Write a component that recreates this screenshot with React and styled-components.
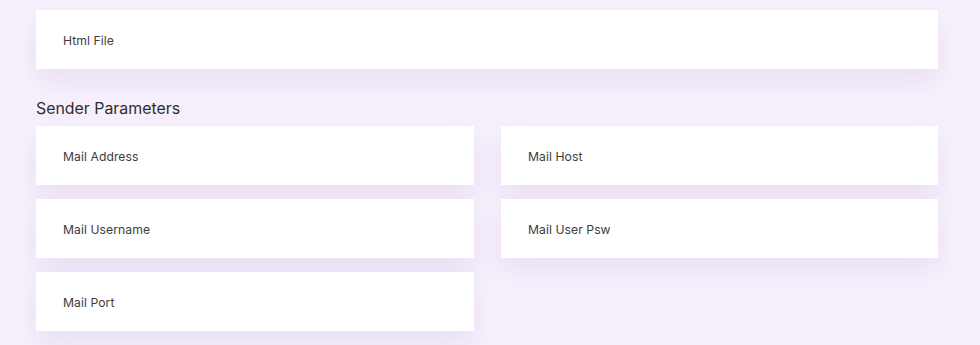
import styled, { createGlobalStyle } from 'styled-components';

const GlobalStyle = createGlobalStyle`
  html, body {
    margin: 0;
    padding: 0;
    background: #f7f0fc;
    font-family: Inter, "Noto Sans", sans-serif;
  }
`;

const Page = styled.div`
  box-sizing: border-box;
  width: 980px;
  min-height: 345px;
  padding: 10px 42px 14px 36px;
  background: #f7f0fc;
`;

const Card = styled.div`
  box-sizing: border-box;
  height: 59px;
  display: flex;
  align-items: center;
  padding: 2px 27px 0;
  background: #ffffff;
  box-shadow: 0 12px 28px rgba(110, 80, 170, 0.1);
  font-size: 12.2px;
  letter-spacing: 0.05px;
  color: #3d3d3d;
`;

const SectionTitle = styled.h3`
  margin: 30px 0 7px;
  font-size: 15.9px;
  line-height: 20px;
  font-weight: 400;
  color: #2e2e2e;
`;

const Grid = styled.div`
  display: grid;
  grid-template-columns: 438px 437px;
  column-gap: 27px;
  row-gap: 14px;
`;

function App() {
    return (
        <Page>
            <GlobalStyle />
            <Card>Html File</Card>
            <SectionTitle>Sender Parameters</SectionTitle>
            <Grid>
                <Card>Mail Address</Card>
                <Card>Mail Host</Card>
                <Card>Mail Username</Card>
                <Card>Mail User Psw</Card>
                <Card>Mail Port</Card>
            </Grid>
        </Page>
    );
}

export default App;
